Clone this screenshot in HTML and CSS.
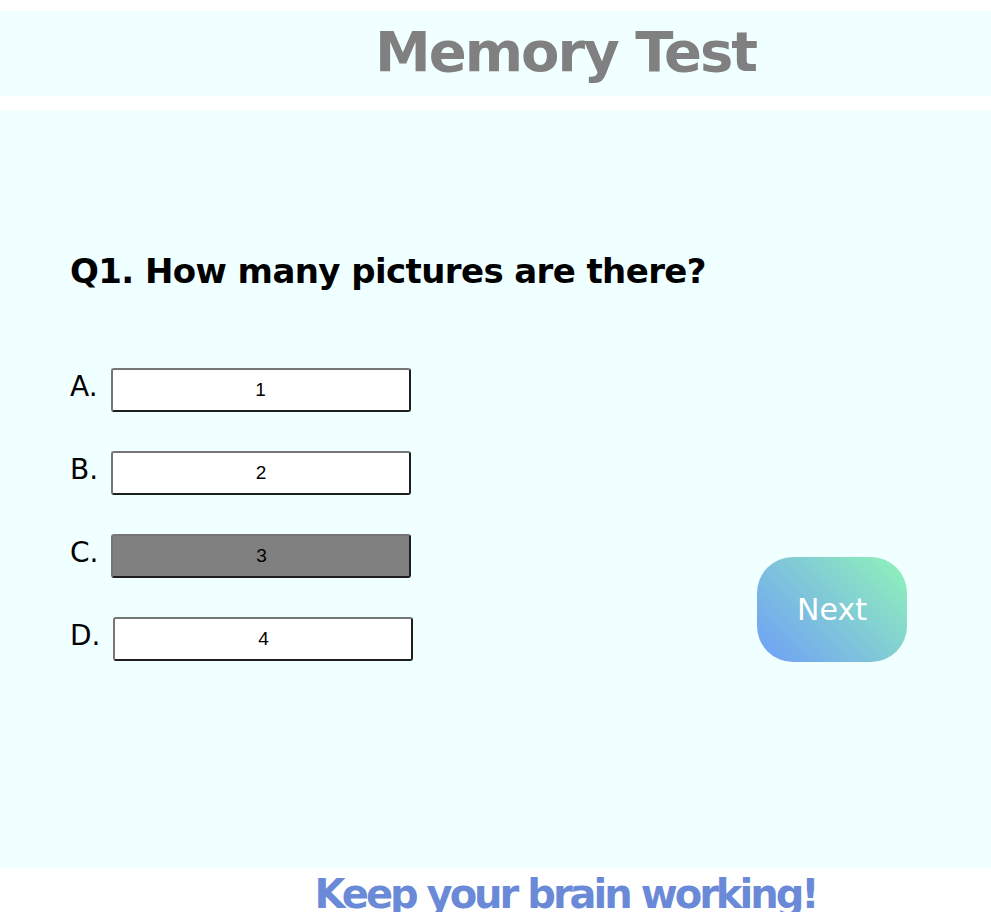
FILE: index.html
```html
<!DOCTYPE html>
<html lang="en">
<head>
<meta charset="utf-8">
<title>Memory Test</title>
<link rel="stylesheet" href="styles.css">
</head>
<body>
<header class="top-band">
  <h1 class="title">Memory Test</h1>
</header>
<main class="quiz">
  <h2 class="question">Q1. How many pictures are there?</h2>
  <div class="quiz-body">
    <ul class="options">
      <li class="option"><span class="letter">A.</span><button class="choice">1</button></li>
      <li class="option"><span class="letter">B.</span><button class="choice">2</button></li>
      <li class="option"><span class="letter">C.</span><button class="choice choice-selected">3</button></li>
      <li class="option option-d"><span class="letter">D.</span><button class="choice">4</button></li>
    </ul>
    <button class="next">Next</button>
  </div>
</main>
<footer class="bottom">
  <p class="slogan">Keep your brain working!</p>
</footer>
</body>
</html>
```
FILE: styles.css
```css
html, body {
  margin: 0;
  padding: 0;
  background: #ffffff;
}
body {
  font-family: "DejaVu Sans", Verdana, sans-serif;
  overflow: hidden;
  height: 912px;
}
.top-band {
  margin-top: 11px;
  height: 85px;
  background: #f0ffff;
  display: flex;
  align-items: center;
  justify-content: center;
  padding-left: 140px;
}
.title {
  margin: 0 0 4px;
  font-size: 56px;
  font-weight: bold;
  color: #808080;
  letter-spacing: -2px;
  line-height: 1;
}
.quiz {
  margin-top: 15px;
  height: 757px;
  box-sizing: border-box;
  background: #f0ffff;
  padding: 140px 84px 0 70px;
}
.question {
  margin: 0;
  font-size: 34px;
  font-weight: bold;
  color: #000;
  line-height: normal;
  letter-spacing: -0.6px;
}
.quiz-body {
  display: flex;
  align-items: flex-end;
  justify-content: space-between;
  margin-top: 77px;
}
.options {
  list-style: none;
  margin: 0;
  padding: 0;
  display: flex;
  flex-direction: column;
  gap: 39px;
}
.option {
  display: flex;
  align-items: baseline;
  gap: 13px;
}
.letter {
  font-size: 28px;
  color: #000;
}
.choice {
  width: 300px;
  height: 44px;
  box-sizing: border-box;
  background: #ffffff;
  border: 2px solid;
  border-color: #767676 #1e1e1e #1e1e1e #767676;
  border-radius: 3px;
  font-family: "Liberation Sans", Arial, sans-serif;
  font-size: 19px;
  color: #000;
  padding: 0;
}
.choice-selected {
  background: #808080;
}
.next {
  width: 150px;
  height: 105px;
  margin-bottom: -1px;
  border: none;
  border-radius: 36px;
  background: linear-gradient(45deg, #6e9ff7 0%, #80c8d8 50%, #90f4b8 100%);
  color: #ffffff;
  font-family: "DejaVu Sans", Verdana, sans-serif;
  font-size: 30px;
  padding: 0;
}
.bottom {
  padding-left: 140px;
  text-align: center;
}
.slogan {
  margin: 3px 0 0;
  font-size: 40px;
  font-weight: bold;
  color: #6a8ad8;
  letter-spacing: -3px;
  line-height: normal;
}
```
